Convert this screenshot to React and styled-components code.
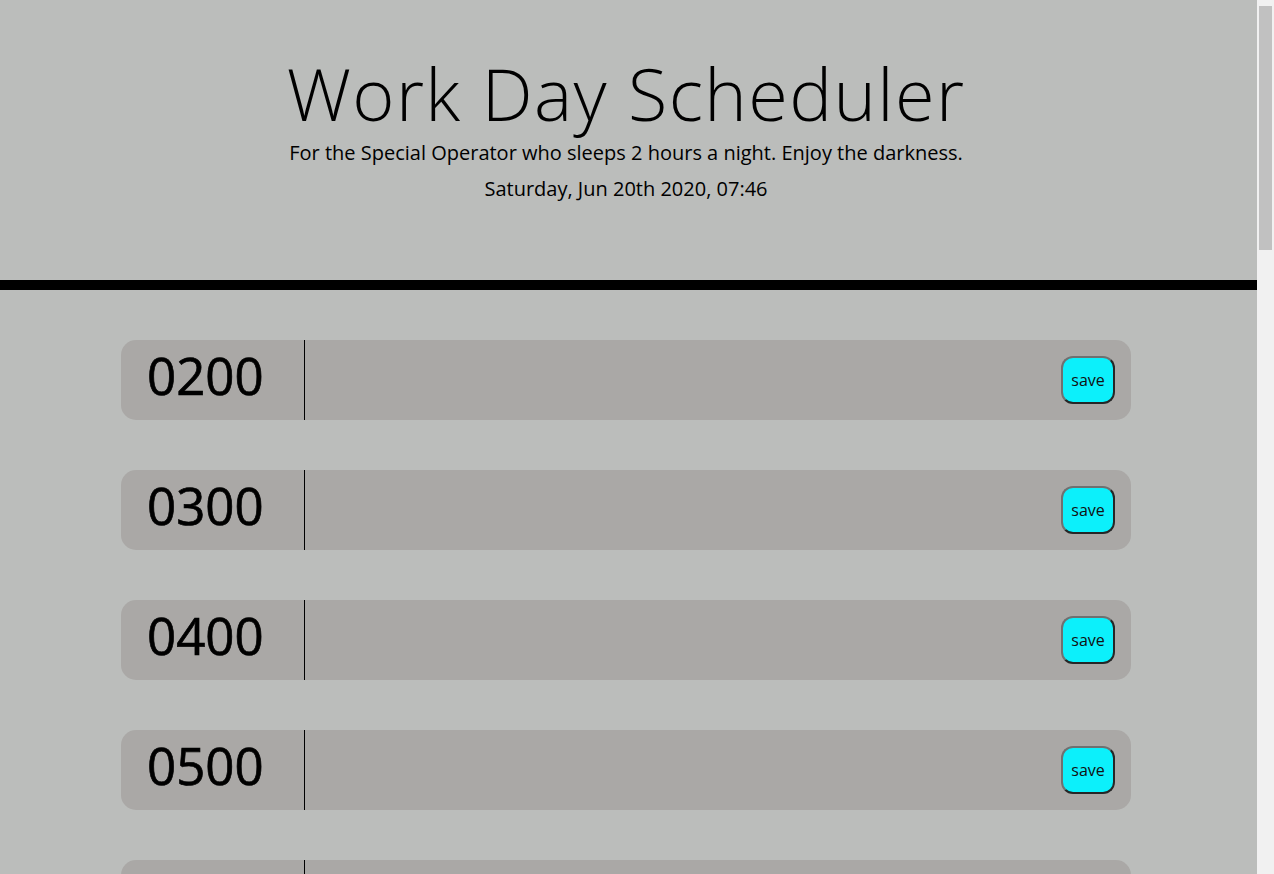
import React from 'react'
import styled, { createGlobalStyle } from 'styled-components'

const hours = [
  '0200', '0300', '0400', '0500', '0600', '0700', '0800', '0900', '1000', '1100',
  '1200', '1300', '1400', '1500', '1600', '1700', '1800', '1900', '2000', '2100', '2200',
]

const GlobalStyle = createGlobalStyle`
  html, body {
    margin: 0;
    padding: 0;
    background: #bbbdbb;
    font-family: 'Open Sans', 'Noto Sans', sans-serif;
    color: #000;
  }
  * {
    box-sizing: border-box;
  }
`

// stand-in for the browser's classic scrollbar seen in the screenshot
const ScrollTrack = styled.div`
  position: fixed;
  top: 0;
  right: 0;
  width: 17px;
  height: 100vh;
  padding: 6px 2px 0;
  background: #f1f1f1;
`

const ScrollThumb = styled.div`
  height: 244px;
  background: #c1c1c1;
`

const Page = styled.div`
  margin-right: 17px;
`

const Header = styled.header`
  height: 290px;
  padding: 50px 5px 0 0;
  border-bottom: 10px solid #000;
  text-align: center;
`

const Title = styled.h1`
  margin: 0;
  font-size: 72px;
  font-weight: 300;
  line-height: 1.2;
  letter-spacing: 1.4px;
`

const Lead = styled.p`
  margin: ${(p) => (p.$gap ? '6px' : '2px')} 0 0;
  font-size: 20px;
  font-weight: 400;
  line-height: 1.5;
`

const Schedule = styled.main`
  display: flex;
  flex-direction: column;
  gap: 50px;
  width: 1010px;
  margin-left: 121px;
  padding: 50px 0 110px;
`

const Row = styled.div`
  display: flex;
  align-items: center;
  height: 80px;
  background: #aaa8a6;
  border-radius: 15px;
  overflow: hidden;
`

const Hour = styled.div`
  display: flex;
  align-items: center;
  align-self: stretch;
  width: 184px;
  padding: 0 0 10px 26px;
  border-right: 1px solid #000;
  font-size: 51px;
  font-weight: 400;
  -webkit-text-stroke: 0.7px #000;
  line-height: 1;
`

const Task = styled.textarea`
  flex: 1;
  align-self: stretch;
  border: none;
  background: transparent;
  resize: none;
  outline: none;
  font: inherit;
  font-size: 18px;
  padding: 10px 16px;
`

const SaveButton = styled.button`
  width: 54px;
  height: 48px;
  margin-right: 16px;
  flex-shrink: 0;
  padding: 0;
  background: #0cf0fb;
  border: 2px solid;
  border-color: #707070 #262626 #262626 #707070;
  border-radius: 12px;
  font-family: 'Open Sans', 'Noto Sans', sans-serif;
  font-size: 16px;
  color: #111;
  cursor: pointer;
`

export default function App() {
  return (
    <>
      <GlobalStyle />
      <Page>
        <Header>
          <Title>Work Day Scheduler</Title>
          <Lead>For the Special Operator who sleeps 2 hours a night. Enjoy the darkness.</Lead>
          <Lead $gap>Saturday, Jun 20th 2020, 07:46</Lead>
        </Header>
        <Schedule>
          {hours.map((h) => (
            <Row key={h}>
              <Hour>{h}</Hour>
              <Task />
              <SaveButton>save</SaveButton>
            </Row>
          ))}
        </Schedule>
      </Page>
      <ScrollTrack>
        <ScrollThumb />
      </ScrollTrack>
    </>
  )
}
